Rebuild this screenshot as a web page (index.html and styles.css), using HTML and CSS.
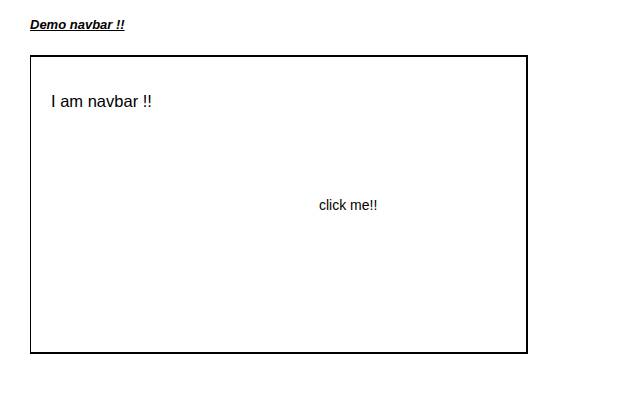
FILE: index.html
```html
<!DOCTYPE html>
<html>
<head>
<meta charset="utf-8">
<link rel="stylesheet" href="styles.css">
</head>
<body>
<div class="page">
  <h1 class="title">Demo navbar !!</h1>
  <div class="navbar">
    <div class="navbar-text">I am navbar !!</div>
    <div class="navbar-action">
      <span class="click">click me!!</span>
    </div>
  </div>
</div>
</body>
</html>
```
FILE: styles.css
```css
html, body {
  margin: 0;
  padding: 0;
  background: #fff;
}
body {
  font-family: "Liberation Sans", Arial, sans-serif;
  color: #000;
}
.page {
  padding: 17px 0 0 30px;
}
.title {
  margin: 0;
  font-size: 13px;
  font-weight: bold;
  font-style: italic;
  text-decoration: underline;
  line-height: 16px;
}
.navbar {
  margin-top: 22px;
  border-top: 2px solid #000;
  border-left: 1px solid #000;
  border-right: 2px solid #000;
  border-bottom: 2px solid #000;
  display: flex;
  flex-direction: column;
  padding: 35px 0 0 20px;
  box-sizing: border-box;
  width: 498px;
  height: 299px;
}
.navbar-text {
  font-size: 16.5px;
  line-height: 18px;
}
.navbar-action {
  padding: 87px 0 0 268px;
  font-size: 14px;
  line-height: 16px;
}
```
